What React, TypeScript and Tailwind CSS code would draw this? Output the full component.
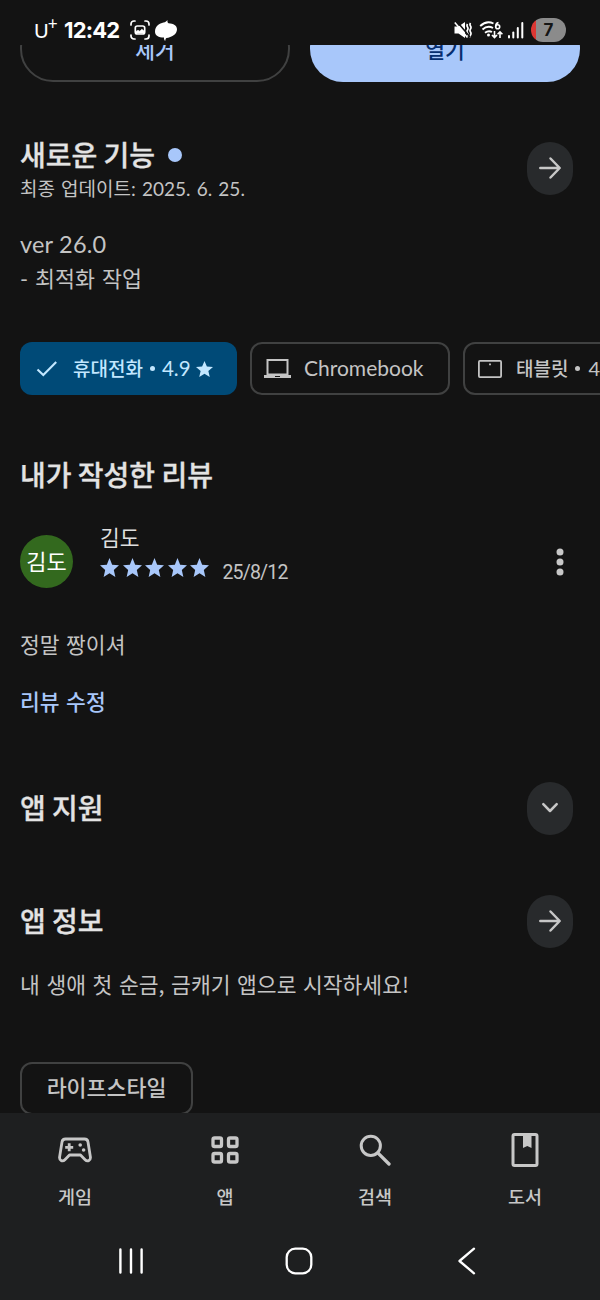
import type { ReactNode } from "react";

const STAR = "M12 17.27 18.18 21l-1.64-7.03L22 9.24l-7.19-.61L12 2 9.19 8.63 2 9.24l5.46 4.73L5.82 21z";

function Star({ className }: { className: string }) {
  return (
    <svg viewBox="2 2 20 19" className={className} fill="currentColor" preserveAspectRatio="none">
      <path d={STAR} />
    </svg>
  );
}

function StatusBar() {
  return (
    <header className="flex h-[45px] shrink-0 items-start justify-between pl-[34px] pr-[34px] text-white">
      <div className="flex h-[60px] items-center">
        <span className="flex w-[30px] items-start text-[20px] leading-[24px]">
          <span className="font-['Lato',sans-serif]">U</span>
          <span className="-mt-[4px] -ml-[1px] text-[17px] leading-[20px] font-['Lato',sans-serif]">+</span>
        </span>
        <span className="w-[66px] whitespace-nowrap text-[22px] font-bold leading-[24px] tracking-[-0.85px] font-['Inter',sans-serif]">12:42</span>
        <svg width="20" height="20" viewBox="0 0 20 20" className="shrink-0" fill="none" stroke="white" strokeWidth="1.7" strokeLinecap="round">
          <path d="M1 5V4a3 3 0 0 1 3-3h1M15 1h1a3 3 0 0 1 3 3v1M19 15v1a3 3 0 0 1-3 3h-1M5 19H4a3 3 0 0 1-3-3v-1" />
          <rect x="5.3" y="6" width="9.4" height="8" rx="2" />
          <path d="M6 13v-1.6l2-1.2 1.8 1 2-2 2.4 1.8v2z" fill="white" strokeWidth=".6" />
        </svg>
        <svg width="22" height="21" viewBox="0 0 22 21" className="ml-[5px] shrink-0" fill="white">
          <path d="M12.5 0C12.3 1.500 12.500 2.500 13.500 3.300C18.500 3.500 22 5.500 22 9.300C22 14.500 16.500 17.500 11.500 18C10.600 18.700 10.400 19.800 10.200 21C9.200 20 8.800 18.800 9 17.500C3.500 17.500 0 15.500 0 11.700C0 6.500 4.500 3.300 8.500 2.600C10.500 2.200 11.700 1.200 12.500 0z" />
        </svg>
      </div>
      <div className="flex h-[60px] items-center">
        <svg width="18" height="18" viewBox="0 0 18 18" className="shrink-0" fill="none" stroke="white" strokeWidth="1.7">
          <path d="M.5 5.500h4L11 1v16l-6.500-4.500h-4z" fill="white" stroke="none" />
          <path d="M13.500 3q-1 1.500 0 3t0 3 0 3 0 3M16.500 2q-1 1.500 0 3t0 3 0 3 0 3 0 2" />
          <path d="M2.500 0 16 16" stroke="#131313" strokeWidth="1.600" />
          <path d="M.8 1.500 13.500 16.500" strokeWidth="1.600" />
        </svg>
        <svg width="25" height="20" viewBox="0 0 25 20" className="ml-[7px] shrink-0" fill="none" stroke="white" strokeWidth="1.900">
          <path d="M1.200 6Q7.500 0 14.500 3.500M3.500 9.500Q8.500 5 14 8M6 12.800Q9.500 10 13 12" />
          <circle cx="9.500" cy="15" r="1.500" fill="white" stroke="none" />
          <path d="M19.500 2.500Q16.700 3 16.700 6.500" strokeWidth="1.700" />
          <circle cx="18.700" cy="6.800" r="2" strokeWidth="1.600" />
          <path d="M15.500 11v6M13 15l2.500 2.500L18 15M21 18v-6M18.600 14.200 21 11.800l2.400 2.400" strokeWidth="1.600" />
        </svg>
        <svg width="16" height="17" viewBox="0 0 16 17" className="ml-[4px] shrink-0" fill="white">
          <rect y="13" width="2" height="3.500" rx="1" />
          <rect x="4.300" y="9.500" width="2" height="7" rx="1" />
          <rect x="8.800" y="5" width="2" height="11.500" rx="1" />
          <rect x="13.300" width="2" height="16.500" rx="1" />
        </svg>
        <span className="ml-[7px] flex h-6 w-[35px] items-center justify-center overflow-hidden rounded-full bg-gradient-to-r from-[#dc3834] from-[15%] to-[#8b8b8b] to-[15%] text-[17px] font-bold leading-6 text-[#151515] font-['Inter',sans-serif]">7</span>
      </div>
    </header>
  );
}

function ArrowIcon() {
  return (
    <svg width="24" height="24" viewBox="0 0 24 24" className="-mt-px" fill="none" stroke="#c7c7c7" strokeWidth="2.500" strokeLinecap="round" strokeLinejoin="round">
      <path d="M2.300 12H21.500M12.500 2.500 21.700 12 12.500 21.500" />
    </svg>
  );
}

function ChevronIcon() {
  return (
    <svg width="18" height="12" viewBox="0 0 18 12" className="-mt-px" fill="none" stroke="#c7c7c7" strokeWidth="2.500" strokeLinecap="round" strokeLinejoin="round">
      <path d="M2.300 2.200 9 9l6.700-6.800" />
    </svg>
  );
}

function RoundButton({ children }: { children: ReactNode }) {
  return (
    <button className="flex h-[53px] w-[46px] shrink-0 items-center justify-center rounded-[23px] bg-[#282a2c]">{children}</button>
  );
}

function Heading({ children }: { children: ReactNode }) {
  return (
    <h2 className="-mt-px mb-px whitespace-nowrap text-[28px] font-medium leading-9 text-[#e3e3e3] [-webkit-text-stroke:0.3px_#e3e3e3]">
      {children}
    </h2>
  );
}

function NavItem({ label, children }: { label: string; children: ReactNode }) {
  return (
    <div className="flex flex-col items-center">
      <div className="flex h-[74px] items-center justify-center">{children}</div>
      <span className="text-[18.5px] font-medium leading-[18px] text-[#c7c7c7]">{label}</span>
    </div>
  );
}

export default function App() {
  return (
    <div className="flex h-[1300px] w-[600px] flex-col overflow-hidden bg-[#131313] text-[#c4c4c4] font-['Noto_Sans_CJK_KR',sans-serif]">
      <StatusBar />

      <main className="flex h-[1068px] shrink-0 flex-col overflow-hidden">
        <div className="-mt-[30px] grid shrink-0 grid-cols-2 gap-5 px-5 text-[21.5px] font-medium">
          <button className="h-[67px] rounded-[33px] border-2 border-[#404141] pt-0.5 text-[#a8c7fa]">제거</button>
          <button className="h-[67px] rounded-[33px] bg-[#a8c7fa] pt-0.5 text-[#062e6f]">열기</button>
        </div>

        <section className="mt-[55px] shrink-0 pl-5 pr-[27px]">
          <div className="flex h-[67px] items-start justify-between">
            <div>
              <div className="flex items-center gap-[13px]">
                <Heading>새로운 기능</Heading>
                <span className="h-3.5 w-3.5 rounded-full bg-[#a8c7fa]" />
              </div>
              <p className="whitespace-nowrap text-[19px] leading-[31px] [word-spacing:1.3px] font-['Lato','Noto_Sans_CJK_KR',sans-serif]">최종 업데이트: 2025. 6. 25.</p>
            </div>
            <div className="mt-[5px]">
              <RoundButton><ArrowIcon /></RoundButton>
            </div>
          </div>
          <p className="mt-[23px] text-[23.5px] leading-[34px] tracking-[0.2px] font-['Lato',sans-serif]">ver 26.0</p>
          <p className="mt-px text-[21.7px] leading-[34px] [word-spacing:1.5px] font-['Lato','Noto_Sans_CJK_KR',sans-serif]">- 최적화 작업</p>
        </section>

        <div className="mt-[46px] flex h-[53px] shrink-0 gap-[13px] overflow-hidden pl-5">
          <button className="flex w-[217px] shrink-0 items-center whitespace-nowrap rounded-xl bg-[#004a77] pl-4 text-[19px] text-[#c2e7ff]">
            <svg width="22" height="18" viewBox="0 0 22 18" className="mr-[15px]" fill="none" stroke="currentColor" strokeWidth="2.100">
              <path d="M1.500 9.500 7.300 15 20.200 2" />
            </svg>
            <span className="-mt-px font-medium">휴대전화</span>
            <span className="ml-[7px] h-[5px] w-[5px] rounded-full bg-[#c2e7ff]" />
            <span className="ml-[7px] text-[20.5px] font-['Lato',sans-serif]">4.9</span>
            <Star className="ml-[5px] h-[16px] w-[17px]" />
          </button>
          <button className="flex w-[200px] shrink-0 items-center whitespace-nowrap rounded-xl border-2 border-[#404141] pl-[12px]">
            <svg width="27" height="20" viewBox="0 0 27 20" className="mr-[13px] shrink-0" fill="none" stroke="currentColor" strokeWidth="2">
              <path d="M3.500 1h20v14.500h-20z" />
              <path d="M0 17.500h27" strokeWidth="3" />
              <path d="M11 17.500h5" stroke="#131313" strokeWidth="1" />
            </svg>
            <span className="-mt-px text-[21px] font-['Lato',sans-serif]">Chromebook</span>
          </button>
          <button className="flex w-[220px] shrink-0 items-center whitespace-nowrap rounded-xl border-2 border-[#404141] pl-[13px] text-[19px]">
            <svg width="24" height="18" viewBox="0 0 24 18" className="mr-[14px] shrink-0" fill="none" stroke="currentColor" strokeWidth="1.800">
              <rect x=".9" y=".9" width="22.200" height="16.200" rx="1" />
              <path d="M12 3.500v1.800" />
            </svg>
            <span className="-mt-px font-medium">태블릿</span>
            <span className="ml-[7px] h-[5px] w-[5px] shrink-0 rounded-full bg-[#c4c4c4]" />
            <span className="-mt-0.5 ml-[8px] text-[20px] font-['Lato',sans-serif]">4.8</span>
          </button>
        </div>

        <section className="mt-[62px] shrink-0 px-5">
          <Heading>내가 작성한 리뷰</Heading>
          <div className="mt-[31px] flex h-[65px] items-start">
            <div className="mt-3 flex h-[53px] w-[53px] shrink-0 items-center justify-center rounded-full bg-[#33691e] pb-0.5 text-[22px] text-white">김도</div>
            <div className="ml-[27px] grow">
              <p className="-mt-px mb-px text-[21.5px] leading-[30px] text-[#dedede]">김도</p>
              <div className="flex items-start">
                <div className="mt-[5px] flex gap-[3.6px] text-[#a8c7fa]">
                  {[0, 1, 2, 3, 4].map((n) => (
                    <Star key={n} className="h-[19px] w-[19px]" />
                  ))}
                </div>
                <span className="ml-[13px] mt-[5px] text-[19.5px] leading-[30px] tracking-[-0.8px] font-['Roboto',sans-serif]">25/8/12</span>
              </div>
            </div>
            <svg width="8" height="28" viewBox="0 0 8 28" className="mr-[16px] mt-[25px]" fill="#c7c7c7">
              <circle cx="4" cy="4" r="3.500" />
              <circle cx="4" cy="14" r="3.500" />
              <circle cx="4" cy="24" r="3.500" />
            </svg>
          </div>
          <p className="mt-[41px] text-[21.5px] leading-[30px] [word-spacing:1.7px]">정말 짱이셔</p>
          <a className="mt-[27px] block text-[21.5px] font-medium leading-[30px] text-[#a8c7fa] [word-spacing:1.7px]">리뷰 수정</a>
        </section>

        <section className="mt-[66px] flex shrink-0 items-center justify-between pl-5 pr-[27px]">
          <div className="pb-0.5">
            <Heading>앱 지원</Heading>
          </div>
          <RoundButton><ChevronIcon /></RoundButton>
        </section>

        <section className="mt-[60px] shrink-0 pl-5 pr-[27px]">
          <div className="flex items-center justify-between">
            <div className="pb-0.5">
              <Heading>앱 정보</Heading>
            </div>
            <RoundButton><ArrowIcon /></RoundButton>
          </div>
          <p className="mt-[21px] whitespace-nowrap text-[21.5px] leading-[30px] [word-spacing:1.8px]">내 생애 첫 순금, 금캐기 앱으로 시작하세요!</p>
          <button className="mt-[63px] flex h-[53px] w-[173px] items-center justify-center rounded-xl border-2 border-[#404141] pb-0.5 text-[21.7px] font-medium">라이프스타일</button>
        </section>
      </main>

      <footer className="flex grow flex-col bg-[#1e1f20]">
        <nav className="grid h-[109px] grid-cols-4">
          <NavItem label="게임">
            <svg width="34" height="26" viewBox="0 0 34 26" fill="none" stroke="#c7c7c7" strokeWidth="2.800" strokeLinejoin="round">
              <path d="M7.500 2h19c2 0 3.200 1.100 3.500 3l2.400 15c.5 4-3.200 4.800-5.300 2.700L22.500 18h-11l-4.600 4.700C4.800 24.800 1.100 24 1.600 20L4 5c.3-1.900 1.500-3 3.500-3z" />
              <path d="M11.200 6.300v8M7.200 10.300h8" />
              <circle cx="22.200" cy="8" r="1.800" fill="#c7c7c7" stroke="none" />
              <circle cx="25.600" cy="13" r="1.800" fill="#c7c7c7" stroke="none" />
            </svg>
          </NavItem>
          <NavItem label="앱">
            <svg width="28" height="28" viewBox="0 0 28 28" fill="none" stroke="#c7c7c7" strokeWidth="3.300">
              <rect x="2" y="2" width="8.500" height="8.500" rx="1.600" />
              <rect x="17.500" y="2" width="8.500" height="8.500" rx="1.600" />
              <rect x="2" y="17.500" width="8.500" height="8.500" rx="1.600" />
              <rect x="17.500" y="17.500" width="8.500" height="8.500" rx="1.600" />
            </svg>
          </NavItem>
          <NavItem label="검색">
            <svg width="32" height="32" viewBox="0 0 32 32" fill="none" stroke="#c7c7c7" strokeWidth="3" strokeLinecap="round">
              <circle cx="11.800" cy="11.800" r="9.600" />
              <path d="M18.800 18.800 30 30" strokeWidth="3.300" />
            </svg>
          </NavItem>
          <NavItem label="도서">
            <svg width="28" height="34" viewBox="0 0 28 34" fill="none" stroke="#c7c7c7" strokeWidth="3">
              <rect x="2" y="1.500" width="24" height="31" rx="1.500" />
              <path d="M12 2h8.500v13l-4.200-2-4.300 2z" fill="#c7c7c7" stroke="none" />
            </svg>
          </NavItem>
        </nav>
        <div className="flex h-[78px] items-start justify-between pl-[118px] pr-[124px] pt-[25px]">
          <svg width="26" height="28" viewBox="0 0 26 28" fill="none" stroke="white" strokeWidth="2.400" strokeLinecap="round">
            <path d="M2.400 2.500v23M13 2.500v23M23.600 2.500v23" />
          </svg>
          <svg width="28" height="28" viewBox="0 0 28 28" className="-ml-[5px]" fill="none" stroke="white" strokeWidth="2.300">
            <rect x="1.700" y="1.700" width="24.600" height="24.600" rx="8.500" />
          </svg>
          <svg width="18" height="28" viewBox="0 0 18 28" fill="none" stroke="white" strokeWidth="2.300" strokeLinecap="round" strokeLinejoin="round">
            <path d="M16 1.700 1.500 14 16 26.300" />
          </svg>
        </div>
      </footer>
    </div>
  );
}
